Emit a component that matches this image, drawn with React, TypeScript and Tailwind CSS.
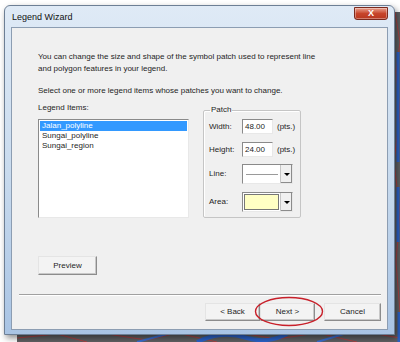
import React from 'react';

const font = { fontFamily: '"Liberation Sans", Arial, sans-serif' };
const txt = 'text-[8px] leading-[12px] text-[#1e1e1e]';
const btn =
  'flex items-center justify-center border border-t-[#e4e4e4] border-l-[#e4e4e4] border-r-[#8c8c8c] border-b-[#8c8c8c] bg-[#f3f3f3] text-[8px] text-[#1e1e1e] shadow-[inset_-1px_-1px_0_#c8c8c8]';
const sunken = 'border border-t-[#8a8a8a] border-l-[#8a8a8a] border-r-[#e8e8e8] border-b-[#e8e8e8] bg-white';

function Map() {
  return (
    <svg className="absolute left-[17px] top-[12px] h-[330px] w-[383px]" viewBox="0 0 383 330" preserveAspectRatio="none">
      <rect width="383" height="330" fill="#5f6063" />
      <path d="M0 326 L40 322 L70 330 M90 322 L130 328 L160 321 L200 330 M230 322 L260 327 L300 321 L340 330 M360 322 L383 326" stroke="#c0383a" strokeWidth="0.8" fill="none" />
      <path d="M378 0 L383 30 L379 60 L383 100 L377 150 L383 200 L379 250 L383 300" stroke="#c0383a" strokeWidth="0.8" fill="none" />
      <path d="M180 330 Q205 318 230 326 Q250 332 270 322" stroke="#2b62c8" strokeWidth="4" fill="none" />
      <path d="M381 40 L381 150 M381 175 L381 230 M382 300 L382 330" stroke="#2b62c8" strokeWidth="3" fill="none" />
      <path d="M120 330 L150 322 M300 330 L330 321" stroke="#3a6fd0" strokeWidth="2" fill="none" />
    </svg>
  );
}

function Combo({ children }: { children: React.ReactNode }) {
  return (
    <div className={`flex h-[20px] w-[51px] ${sunken}`}>
      <div className="flex flex-1 items-center justify-center p-[1px]">{children}</div>
      <div className="flex w-[12px] items-center justify-center border-l border-[#c6c6c6] bg-[#f0f0f0] shadow-[inset_-1px_-1px_0_#8c8c8c]">
        <span className="h-0 w-0 border-x-[3px] border-t-[3px] border-x-transparent border-t-black" />
      </div>
    </div>
  );
}

export default function App() {
  return (
    <div className="relative h-[342px] w-[400px] overflow-hidden bg-white" style={font}>
      <Map />
      <div className="relative ml-[4px] mt-[5px] flex h-[330px] w-[391px] flex-col rounded-t-[6px] border border-[#6d7f95] bg-gradient-to-b from-[#dfeaf6] via-[#c9dbee] to-[#a9c4e4] px-[6px] pb-[4px] shadow-[2px_3px_6px_rgba(0,0,0,0.45)]">
        {/* title bar */}
        <div className="flex h-[21px] shrink-0 items-start justify-between">
          <span className="mt-[5px] pl-[1px] text-[9px] leading-[12px] text-[#111]">Legend Wizard</span>
          <div className="mt-[1px] flex h-[13px] w-[34px] items-center justify-center rounded-b-[3px] border border-[#7a2a1e] bg-gradient-to-b from-[#e8a08e] via-[#c7452b] to-[#b8371f] text-[9px] font-bold leading-none text-white shadow-[inset_0_0_0_1px_rgba(255,255,255,0.35)]">
            X
          </div>
        </div>

        {/* client area */}
        <div className={`flex flex-1 flex-col border border-[#8c9db2] bg-[#f0f0f0] pl-[26px] pt-[23px] ${txt}`}>
          <p className="w-[300px]">
            You can change the size and shape of the symbol patch used to represent line
            <br />
            and polygon features in your legend.
          </p>
          <p className="mt-[10px]">Select one or more legend items whose patches you want to change.</p>

          <div className="mt-[5px] flex gap-[14px]">
            <div className="flex flex-col">
              <span>Legend Items:</span>
              <div className={`mt-[5px] h-[99px] w-[151px] pt-[1px] ${sunken}`}>
                <div className="mx-[1px] h-[10px] bg-[#3399ff] pl-[2px] leading-[10px] text-white">Jalan_polyline</div>
                <div className="pl-[3px] leading-[10px]">Sungai_polyline</div>
                <div className="pl-[3px] leading-[10px]">Sungai_region</div>
              </div>
            </div>

            <fieldset className="mt-[2px] h-[114px] w-[98px] rounded-[2px] border border-[#c5c5c5] pl-[5px] shadow-[inset_1px_1px_0_#fff]">
              <legend className="ml-[1px] px-[1px] leading-[12px]">Patch</legend>
              <div className="mt-[3px] flex items-center">
                <span className="w-[33px]">Width:</span>
                <div className={`flex h-[15px] w-[31px] items-center pl-[2px] ${sunken}`}>48.00</div>
                <span className="ml-[4px]">(pts.)</span>
              </div>
              <div className="mt-[8px] flex items-center">
                <span className="w-[33px]">Height:</span>
                <div className={`flex h-[15px] w-[31px] items-center pl-[2px] ${sunken}`}>24.00</div>
                <span className="ml-[4px]">(pts.)</span>
              </div>
              <div className="mt-[7px] flex items-center">
                <span className="w-[33px]">Line:</span>
                <Combo>
                  <span className="h-[1px] w-[32px] bg-[#9a9a9a]" />
                </Combo>
              </div>
              <div className="mt-[8px] flex items-center">
                <span className="w-[33px]">Area:</span>
                <Combo>
                  <span className="h-full w-full border border-[#777] bg-[#ffffc4]" />
                </Combo>
              </div>
            </fieldset>
          </div>

          <button className={`${btn} mt-[38px] h-[19px] w-[59px]`}>Preview</button>

          <div className="-ml-[19px] mt-[19px] mr-[6px] h-[2px] border-t border-b border-t-[#a0a0a0] border-b-white" />

          <div className="mr-[6px] mt-[7px] flex justify-end">
            <div className="relative flex">
              <button className={`${btn} h-[18px] w-[55px]`}>&lt; Back</button>
              <button className={`${btn} h-[18px] w-[55px]`}>Next &gt;</button>
              <svg className="pointer-events-none absolute left-[49px] top-[-7px] h-[31px] w-[70px]" viewBox="0 0 70 31">
                <ellipse cx="35" cy="15.5" rx="33.5" ry="14" fill="none" stroke="#c8202a" strokeWidth="1.4" />
              </svg>
            </div>
            <button className={`${btn} ml-[9px] h-[18px] w-[57px]`}>Cancel</button>
          </div>
        </div>
      </div>
    </div>
  );
}
